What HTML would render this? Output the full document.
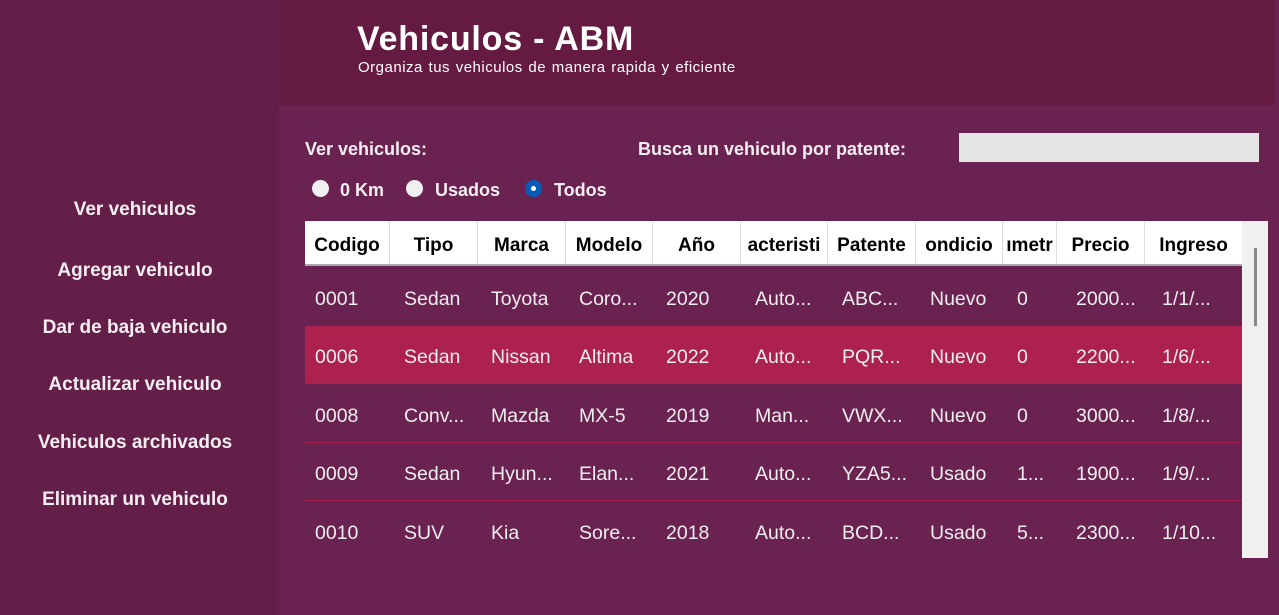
<!DOCTYPE html>
<html><head><meta charset="utf-8"><style>
*{margin:0;padding:0;box-sizing:border-box}
body{width:1279px;height:615px;overflow:hidden;background:#6a2350;font-family:"Liberation Sans",sans-serif;color:#fff;position:relative}
.side{position:absolute;left:0;top:0;width:279px;height:615px;background:#641f48}
.side div{position:absolute;width:270px;text-align:center;font-weight:bold;font-size:19px;color:#f4eef2}
.hdr{position:absolute;left:279px;top:0;width:996px;height:105px;background:#651b41}
.t{position:absolute;left:357px;top:20px;font-size:34px;font-weight:bold;letter-spacing:0.8px}
.st{position:absolute;left:358px;top:59px;font-size:15px;letter-spacing:0.5px;word-spacing:1px}
.lbl{position:absolute;font-weight:bold;font-size:18px;color:#f4eef2}
.search{position:absolute;left:959px;top:133px;width:300px;height:29px;background:#e6e6e6}
.radio{position:absolute;top:180px;width:17px;height:17px;border-radius:50%;background:#f0f0f0}
.radio.on{background:#0a5bb5}
.radio.on::after{content:"";position:absolute;left:6px;top:6px;width:5px;height:5px;border-radius:50%;background:#fff}
.thead{position:absolute;left:305px;top:221px;width:938px;height:45px;background:#fff;border-bottom:2px solid #aaa}
.th{position:absolute;top:0;height:43px;line-height:49px;color:#000;font-weight:bold;font-size:19px;text-align:center;border-right:1px solid #ddd;overflow:hidden;white-space:nowrap}
.row{position:absolute;left:305px;width:938px;height:58px;border-bottom:1px solid #a8204e}
.row span{position:absolute;top:0;line-height:62px;font-size:19.5px;color:#eee;white-space:nowrap}
.sel{background:#ad214f}
.sb{position:absolute;left:1242px;top:221px;width:26px;height:337px;background:#f0f0f0}
.sb::after{content:"";position:absolute;left:12px;top:27px;width:3px;height:78px;background:#888}
</style></head><body>
<div class="side">
<div style="top:199px">Ver vehiculos</div>
<div style="top:260px">Agregar vehiculo</div>
<div style="top:317px">Dar de baja vehiculo</div>
<div style="top:374px">Actualizar vehiculo</div>
<div style="top:432px">Vehiculos archivados</div>
<div style="top:489px">Eliminar un vehiculo</div>
</div>
<div class="hdr"></div>
<div class="t">Vehiculos - ABM</div>
<div class="st">Organiza tus vehiculos de manera rapida y eficiente</div>
<div class="lbl" style="left:305px;top:139px">Ver vehiculos:</div>
<div class="lbl" style="left:638px;top:139px">Busca un vehiculo por patente:</div>
<div class="search"></div>
<div class="radio" style="left:312px"></div><div class="lbl" style="left:340px;top:180px">0 Km</div>
<div class="radio" style="left:406px"></div><div class="lbl" style="left:435px;top:180px">Usados</div>
<div class="radio on" style="left:525px"></div><div class="lbl" style="left:554px;top:180px">Todos</div>
<div class="thead">
<div class="th" style="left:0;width:85px">Codigo</div>
<div class="th" style="left:85px;width:88px">Tipo</div>
<div class="th" style="left:173px;width:88px">Marca</div>
<div class="th" style="left:261px;width:87px">Modelo</div>
<div class="th" style="left:348px;width:88px">Año</div>
<div class="th" style="left:436px;width:87px">acteristi</div>
<div class="th" style="left:523px;width:88px">Patente</div>
<div class="th" style="left:611px;width:87px">ondicio</div>
<div class="th" style="left:698px;width:54px">ımetr</div>
<div class="th" style="left:752px;width:88px">Precio</div>
<div class="th" style="left:840px;width:98px">Ingreso</div>
</div>
<div class="row" style="top:268px;border-bottom:none"><span style="left:10px">0001</span><span style="left:99px">Sedan</span><span style="left:186px">Toyota</span><span style="left:274px">Coro...</span><span style="left:361px">2020</span><span style="left:450px">Auto...</span><span style="left:537px">ABC...</span><span style="left:625px">Nuevo</span><span style="left:712px">0</span><span style="left:771px">2000...</span><span style="left:857px">1/1/...</span></div>
<div class="row sel" style="top:326px"><span style="left:10px">0006</span><span style="left:99px">Sedan</span><span style="left:186px">Nissan</span><span style="left:274px">Altima</span><span style="left:361px">2022</span><span style="left:450px">Auto...</span><span style="left:537px">PQR...</span><span style="left:625px">Nuevo</span><span style="left:712px">0</span><span style="left:771px">2200...</span><span style="left:857px">1/6/...</span></div>
<div class="row" style="top:385px"><span style="left:10px">0008</span><span style="left:99px">Conv...</span><span style="left:186px">Mazda</span><span style="left:274px">MX-5</span><span style="left:361px">2019</span><span style="left:450px">Man...</span><span style="left:537px">VWX...</span><span style="left:625px">Nuevo</span><span style="left:712px">0</span><span style="left:771px">3000...</span><span style="left:857px">1/8/...</span></div>
<div class="row" style="top:443px"><span style="left:10px">0009</span><span style="left:99px">Sedan</span><span style="left:186px">Hyun...</span><span style="left:274px">Elan...</span><span style="left:361px">2021</span><span style="left:450px">Auto...</span><span style="left:537px">YZA5...</span><span style="left:625px">Usado</span><span style="left:712px">1...</span><span style="left:771px">1900...</span><span style="left:857px">1/9/...</span></div>
<div class="row" style="top:502px;border-bottom:none"><span style="left:10px">0010</span><span style="left:99px">SUV</span><span style="left:186px">Kia</span><span style="left:274px">Sore...</span><span style="left:361px">2018</span><span style="left:450px">Auto...</span><span style="left:537px">BCD...</span><span style="left:625px">Usado</span><span style="left:712px">5...</span><span style="left:771px">2300...</span><span style="left:857px">1/10...</span></div>
<div class="sb"></div>
</body></html>
